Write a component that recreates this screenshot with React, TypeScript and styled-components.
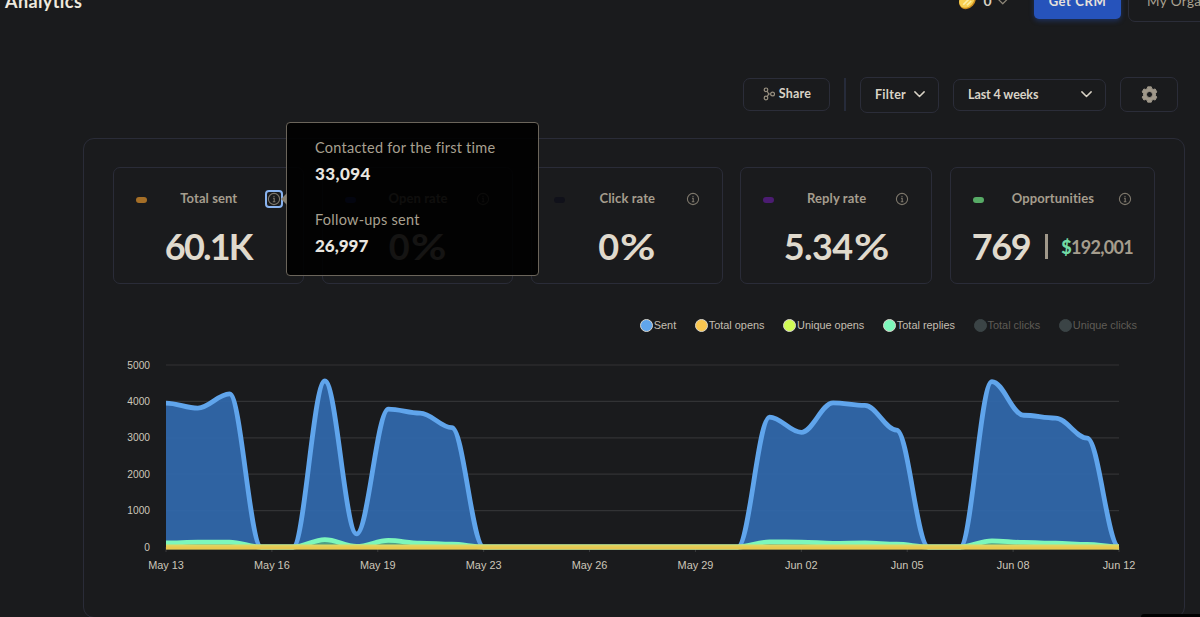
import React from 'react';
import styled, { createGlobalStyle } from 'styled-components';

const Global = createGlobalStyle`
  *{box-sizing:border-box}
  html,body{margin:0;height:100%;overflow:hidden;background:#1a1b1d}
  body{font-family:Lato,"Liberation Sans",sans-serif;color:#e0dacd}
`;

const Page = styled.div`
  height: 617px;
  width: 1200px;
  position: relative;
  overflow: hidden;
  display: flex;
  flex-direction: column;
`;
const TopBar = styled.header`
  display: flex;
  height: 36px;
  margin-top: -18px;
  flex: none;
  align-items: center;
  padding-left: 5px;
`;
const Title = styled.h1`
  margin: 1px 0 0;
  font-size: 18px;
  font-weight: 700;
  line-height: 24px;
  letter-spacing: 0.4px;
  color: #eee9de;
`;
const Credits = styled.div`
  margin-left: auto;
  display: flex;
  align-items: center;
  width: 76px;
  gap: 6.5px;
  font-size: 14px;
  font-weight: 700;
  color: #d5cfc2;
  svg { flex: none; }
  svg:last-child { margin-top: 4px; }
`;
const CrmButton = styled.button`
  width: 87px;
  height: 37px;
  border: 0;
  border-radius: 5px;
  background: #2653bb;
  color: #e6e2db;
  padding: 1px 0 0;
  font: 700 13px Lato, sans-serif;
  letter-spacing: 0.6px;
  box-shadow: 0 2px 5px #2653bb66;
`;
const OrgButton = styled.button`
  align-self: flex-start;
  width: 90px;
  height: 40px;
  flex: none;
  margin: 0 -18px 0 7px;
  border: 1px solid #2b2d39;
  border-radius: 7px;
  background: transparent;
  color: #aaa292;
  text-align: left;
  padding: 0 0 2px 18px;
  font: 400 13.5px Lato, sans-serif;
  letter-spacing: 0.4px;
  white-space: nowrap;
`;
const Toolbar = styled.div`
  display: flex;
  align-items: flex-start;
  justify-content: flex-end;
  height: 36px;
  margin-top: 59px;
  padding-right: 22.5px;
  flex: none;
`;
const ToolButton = styled.button<{ $w: number; $h: number; $gap?: number; $top?: number }>`
  width: ${p => p.$w}px;
  height: ${p => p.$h}px;
  margin: ${p => p.$top ?? 0}px 0 0 ${p => p.$gap ?? 0}px;
  border: 1px solid #2b2d39;
  border-radius: 7px;
  background: transparent;
  color: #d9d3c6;
  display: flex;
  align-items: center;
  justify-content: center;
  padding: 0 13px 1px 14px;
  font: 700 12.5px Lato, sans-serif;
  white-space: nowrap;
`;
const ToolLabel = styled.span<{ $ls: number; $grow?: boolean; $left?: number }>`
  letter-spacing: ${p => p.$ls}px;
  margin-left: ${p => p.$left ?? 0}px;
  margin-top: -1px;
  text-align: left;
  flex: ${p => (p.$grow ? 1 : 'none')};
`;
const Separator = styled.div`
  width: 2px;
  height: 33px;
  margin: 1px 0 0 14px;
  background: #262b3a;
`;
const Panel = styled.main`
  position: relative;
  margin: 25px 15px 0 83px;
  height: 480px;
  flex: none;
  border: 1px solid #2a2c38;
  border-radius: 11px;
  padding: 28px 28px 0;
`;
const Cards = styled.section`
  display: grid;
  grid-template-columns: 191.5px 191.5px 191.5px 191.5px 205.5px;
  column-gap: 17.8px;
  margin-left: 0.5px;
`;
const Card = styled.article`
  height: 117px;
  border: 1px solid #2a2c38;
  border-radius: 7px;
  padding: 19px 22px 0 22px;
`;
const CardHead = styled.div`
  display: flex;
  align-items: center;
  justify-content: space-between;
  height: 24px;
`;
const Pill = styled.i<{ $c: string }>`
  width: 11px;
  height: 6px;
  margin: 1px 0 0 0;
  border-radius: 3px;
  background: ${p => p.$c};
`;
const CardTitle = styled.span`
  font-size: 13px;
  font-weight: 700;
  letter-spacing: 0.1px;
  color: #a59d8d;
  margin: -2px 0 0 5px;
`;
const InfoBox = styled.span<{ $focus?: boolean }>`
  display: flex;
  margin: 0 -1px 0 0;
  padding: 1px;
  border-radius: 3px;
  outline: ${p => (p.$focus ? '2px solid #8ab4f0' : 'none')};
  outline-offset: -1px;
`;
const Value = styled.div<{ $ls: number }>`
  display: flex;
  justify-content: center;
  align-items: center;
  height: 48px;
  margin-top: 11px;
  font-size: 36px;
  font-weight: 700;
  letter-spacing: ${p => p.$ls}px;
  white-space: nowrap;
  color: #e0dacd;
`;
const Percent = styled.span`
  margin: 0 3px 0 4px;
  transform: scaleX(1.2);
`;
const Bar = styled.i`
  flex: none;
  width: 3px;
  height: 25px;
  margin: 1px 13px 0 15px;
  background: #a0988a;
`;
const Amount = styled.span`
  font-size: 18px;
  letter-spacing: -0.7px;
  margin-top: 1px;
  color: #a59d8d;
  b { color: #72dba6; }
`;
const Legend = styled.div`
  display: flex;
  justify-content: flex-end;
  gap: 18.6px;
  height: 16px;
  margin: 33px 19px 0 0;
  font: 10.9px/16px "Liberation Sans", sans-serif;
`;
const LegendItem = styled.span<{ $off?: boolean }>`
  display: flex;
  align-items: center;
  gap: 1px;
  color: ${p => (p.$off ? '#5f5c56' : '#c4beb1')};
`;
const Dot = styled.i<{ $c: string; $off?: boolean }>`
  width: 13px;
  height: 13px;
  border-radius: 50%;
  background: ${p => p.$c};
  border: 1px solid ${p => (p.$off ? p.$c : '#d8d5cc')};
`;
const ChartSvg = styled.svg`
  display: block;
  margin: 26px 0 0 -10px;
  overflow: visible;
  text { font: 10.9px "Liberation Sans", sans-serif; fill: #cdc7ba; }
  .scale { font-size: 10.2px; }
`;
const Tooltip = styled.aside`
  position: absolute;
  z-index: 2;
  left: 286px;
  top: 122px;
  width: 253px;
  height: 154px;
  border: 1px solid #6b655b;
  border-radius: 4px;
  background: rgba(0, 0, 0, 0.91);
  padding: 13px 28px;
`;
const Arrow = styled.i`
  position: absolute;
  left: -6px;
  top: 70px;
  border: 6px solid transparent;
  border-left: 0;
  border-right: 6px solid #857e70;
`;
const TipLabel = styled.div`
  height: 24px;
  line-height: 23px;
  font-size: 14.5px;
  letter-spacing: 0.25px;
  color: #a8a090;
  white-space: nowrap;
`;
const TipValue = styled.div<{ $ls?: number }>`
  height: 28px;
  line-height: 28px;
  margin-bottom: 20px;
  font-size: 17px;
  font-weight: 900;
  letter-spacing: ${p => p.$ls ?? 0}px;
  color: #e9e6e0;
`;
const CornerShade = styled.div`
  position: absolute;
  right: 0;
  bottom: 0;
  width: 59px;
  height: 3px;
  border-top-left-radius: 3px;
  background: #000;
`;

const Chevron = ({ w = 11, c = '#d9d3c6' }: { w?: number; c?: string }) => (
  <svg width={w} height={w * 0.6} viewBox="0 0 10 6" fill="none" stroke={c} strokeWidth="1.3" strokeLinecap="round" strokeLinejoin="round"><path d="M.8.8 5 5 9.2.8" /></svg>
);
const Info = () => (
  <svg width="14" height="14" viewBox="0 0 14 14" fill="none" stroke="#7d776b" strokeWidth="1.1">
    <circle cx="7" cy="7" r="5.6" />
    <path d="M6 6.3h1.2v3.4M5.8 9.8h2.6" />
    <circle cx="7" cy="4.3" r=".4" fill="#7d776b" strokeWidth=".5" />
  </svg>
);
const ShareIcon = () => (
  <svg width="12" height="14" viewBox="0 0 12 14" fill="none" stroke="#989080" strokeWidth="1.2">
    <circle cx="3" cy="2.8" r="1.8" /><circle cx="3" cy="11" r="1.8" /><circle cx="9.6" cy="7" r="1.9" />
    <path d="M4.2 4.2 5.7 7 4.2 9.6M5.7 7h2" />
  </svg>
);
const Gear = () => (
  <svg width="17" height="17" viewBox="0 0 16 16">
    <path fill="#a0988a" stroke="#a0988a" strokeWidth=".9" strokeLinejoin="round" fillRule="evenodd" d="M6.3.8h3.4l.5 1.7 1.3.8 1.8-.5 1.6 2.8-1.2 1.3v2.2l1.2 1.3-1.6 2.8-1.8-.5-1.3.8-.5 1.7H6.3l-.5-1.7-1.3-.8-1.8.5-1.6-2.8 1.2-1.3V6.9L1.1 5.6l1.6-2.8 1.8.5 1.3-.8zM8 5.1a2.9 2.9 0 1 0 0 5.8 2.9 2.9 0 0 0 0-5.8z" />
  </svg>
);
const Coin = () => (
  <svg width="19" height="19" viewBox="0 0 18 18">
    <ellipse cx="9" cy="9" rx="7" ry="9" transform="rotate(42 9 9)" fill="#c98a1c" />
    <ellipse cx="8.4" cy="8.4" rx="6.4" ry="8.4" transform="rotate(42 8.4 8.4)" fill="#f7cf52" />
    <path d="m5 13 8-8M8.5 13.5l4-4" stroke="#fdeea2" strokeWidth="1.6" />
  </svg>
);

const STEP = 953 / 30;
const BASE = 188;
const X0 = 64;
const px = (i: number) => X0 + i * STEP;
const py = (v: number) => BASE - v * 0.0364;
const zeros = (n: number): number[] => Array(n).fill(0);
const sent = [3955, 3815, 4205, 0, 0, 4560, 360, 3790, 3680, 3280, ...zeros(9), 3570, 3150, 3960, 3890, 3210, 0, 0, 4545, 3620, 3540, 2990, 0];
const replies = [110, 135, 135, 0, 0, 200, 15, 180, 105, 75, ...zeros(9), 140, 135, 100, 110, 75, 0, 0, 170, 125, 105, 70, 0];

const curve = (values: number[]) =>
  values.reduce((d, v, i) => {
    if (!i) return `M${px(0)} ${py(v)}`;
    const k = STEP * 0.36;
    return `${d}C${px(i - 1) + k} ${py(values[i - 1])} ${px(i) - k} ${py(v)} ${px(i)} ${py(v)}`;
  }, '');
const area = (values: number[]) => `${curve(values)}V${BASE}H${X0}Z`;
const days = ['May 13', 'May 16', 'May 19', 'May 23', 'May 26', 'May 29', 'Jun 02', 'Jun 05', 'Jun 08', 'Jun 12'];

const Chart = () => (
  <ChartSvg width="1040" height="222">
    <defs><clipPath id="plot"><rect x={X0} y="0" width="953" height="191" /></clipPath></defs>
    {[0, 1, 2, 3, 4, 5].map(n => (
      <g key={n}>
        <line x1={X0} x2={X0 + 953} y1={py(n * 1000)} y2={py(n * 1000)} stroke="#323335" strokeWidth="1.2" />
        <text className="scale" x="48" y={py(n * 1000) + 3.6} textAnchor="end">{n * 1000}</text>
      </g>
    ))}
    {days.map((d, i) => (
      <g key={d}>
        <line x1={X0 + i * 953 / 9} x2={X0 + i * 953 / 9} y1={BASE} y2={BASE + 5} stroke="#3a3b3d" />
        <text x={X0 + i * 953 / 9} y={BASE + 21.5} textAnchor="middle">{d}</text>
      </g>
    ))}
    <g clipPath="url(#plot)" fill="none" strokeWidth="4.8">
      <path d={area(sent)} fill="#3168ab" fillOpacity=".94" />
      <path d={curve(sent)} stroke="#60a5ec" />
      <path d={area(replies)} fill="#4f9f86" />
      <path d={curve(replies)} stroke="#7df7bb" />
      <path d={`M${X0} ${BASE}h953`} stroke="#ddd562" strokeWidth="5.2" />
      <path d={`M${X0} ${BASE + 0.9}h953`} stroke="#e8c850" strokeWidth="2.8" />
    </g>
  </ChartSvg>
);

interface Stat { title: string; value: string; color: string; ls: number; focus?: boolean; percent?: boolean; amount?: string }
const stats: Stat[] = [
  { title: 'Total sent', value: '60.1K', color: '#a56f27', ls: -1.8, focus: true },
  { title: 'Open rate', value: '0', color: '#2338a8', ls: 0, percent: true },
  { title: 'Click rate', value: '0', color: '#10111a', ls: 0, percent: true },
  { title: 'Reply rate', value: '5.34', color: '#4b1c72', ls: -0.6, percent: true },
  { title: 'Opportunities', value: '769', color: '#57ab66', ls: -1.4, amount: '192,001' },
];
const legend = [
  { name: 'Sent', c: '#60a5ec' },
  { name: 'Total opens', c: '#fac750' },
  { name: 'Unique opens', c: '#d0fb55' },
  { name: 'Total replies', c: '#7df7bb' },
  { name: 'Total clicks', c: '#3b4446', off: true },
  { name: 'Unique clicks', c: '#3b4446', off: true },
];

export default function App() {
  return (
    <Page>
      <Global />
      <TopBar>
        <Title>Analytics</Title>
        <Credits><Coin /><span>0</span><Chevron w={9.5} c="#8d8678" /></Credits>
        <CrmButton>Get CRM</CrmButton>
        <OrgButton>My Organization</OrgButton>
      </TopBar>
      <Toolbar>
        <ToolButton $w={87} $h={33} $top={1}><ShareIcon /><ToolLabel $ls={0.2} $left={4}>Share</ToolLabel></ToolButton>
        <Separator />
        <ToolButton $w={79} $h={36} $gap={14}><ToolLabel $ls={0.3} $grow>Filter</ToolLabel><Chevron /></ToolButton>
        <ToolButton $w={153} $h={32} $gap={14} $top={2}><ToolLabel $ls={-0.1} $grow>Last 4 weeks</ToolLabel><Chevron /></ToolButton>
        <ToolButton $w={57.5} $h={35} $gap={14}><Gear /></ToolButton>
      </Toolbar>
      <Panel>
        <Cards>
          {stats.map(s => (
            <Card key={s.title}>
              <CardHead>
                <Pill $c={s.color} />
                <CardTitle>{s.title}</CardTitle>
                <InfoBox $focus={s.focus}><Info /></InfoBox>
              </CardHead>
              <Value $ls={s.ls}>
                <span>{s.value}</span>
                {s.percent && <Percent>%</Percent>}
                {s.amount && <><Bar /><Amount><b>$</b>{s.amount}</Amount></>}
              </Value>
            </Card>
          ))}
        </Cards>
        <Legend>
          {legend.map(l => (
            <LegendItem key={l.name} $off={l.off}><Dot $c={l.c} $off={l.off} />{l.name}</LegendItem>
          ))}
        </Legend>
        <Chart />
      </Panel>
      <Tooltip>
        <Arrow />
        <TipLabel>Contacted for the first time</TipLabel>
        <TipValue $ls={0.4}>33,094</TipValue>
        <TipLabel>Follow-ups sent</TipLabel>
        <TipValue>26,997</TipValue>
      </Tooltip>
      <CornerShade />
    </Page>
  );
}
